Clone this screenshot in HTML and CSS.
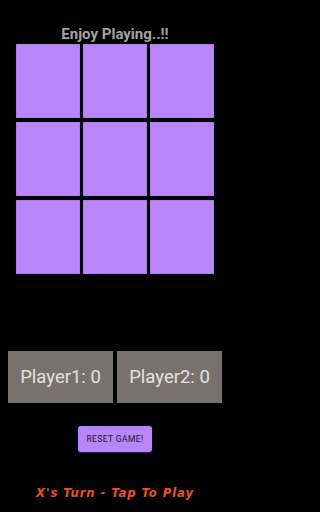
FILE: index.html
```html
<!DOCTYPE html>
<html>
<head>
<meta charset="utf-8">
<link rel="stylesheet" href="styles.css">
</head>
<body>
<div class="screen">
  <div class="title">Enjoy Playing..!!</div>
  <div class="board">
    <div class="cell"></div><div class="cell"></div><div class="cell"></div>
    <div class="cell"></div><div class="cell"></div><div class="cell"></div>
    <div class="cell"></div><div class="cell"></div><div class="cell"></div>
  </div>
  <div class="scores">
    <div class="score">Player1: 0</div>
    <div class="score">Player2: 0</div>
  </div>
  <button class="reset">RESET GAME!</button>
  <div class="status">X's Turn - Tap To Play</div>
</div>
</body>
</html>
```
FILE: styles.css
```css
html, body {
  margin: 0;
  padding: 0;
  background: #000;
}
.screen {
  width: 230px;
  height: 512px;
  display: flex;
  flex-direction: column;
  align-items: center;
  padding-top: 25px;
  box-sizing: border-box;
  font-family: Roboto, "Liberation Sans", sans-serif;
}
.title {
  height: 18px;
  line-height: 18px;
  font-size: 15px;
  font-weight: bold;
  color: #a3a3a3;
}
.board {
  margin-top: 1px;
  display: grid;
  grid-template-columns: repeat(3, 64px);
  grid-template-rows: repeat(3, 74.3px);
  column-gap: 3px;
  row-gap: 3.5px;
}
.cell {
  background: #bb86fc;
  box-shadow: inset 0 0 0 0.5px #a070e0;
}
.scores {
  margin-top: 77px;
  display: flex;
  gap: 4px;
}
.score {
  width: 105px;
  height: 52px;
  background: #78716f;
  color: #e6e1e1;
  font-size: 18.5px;
  display: flex;
  align-items: center;
  justify-content: center;
}
.reset {
  margin-top: 23px;
  width: 74px;
  height: 26px;
  border: none;
  border-radius: 3px;
  background: #b786fa;
  color: #1a1620;
  font-family: Roboto, "Liberation Sans", sans-serif;
  font-weight: 400;
  font-size: 8.5px;
  letter-spacing: 0.4px;
  padding: 0;
  box-shadow: 0 1px 2px rgba(180, 130, 250, 0.3);
}
.status {
  margin-top: 33px;
  font-family: "DejaVu Sans", sans-serif;
  font-style: italic;
  font-weight: bold;
  font-stretch: condensed;
  font-size: 13px;
  color: #f0501e;
  letter-spacing: 0.9px;
}
```
